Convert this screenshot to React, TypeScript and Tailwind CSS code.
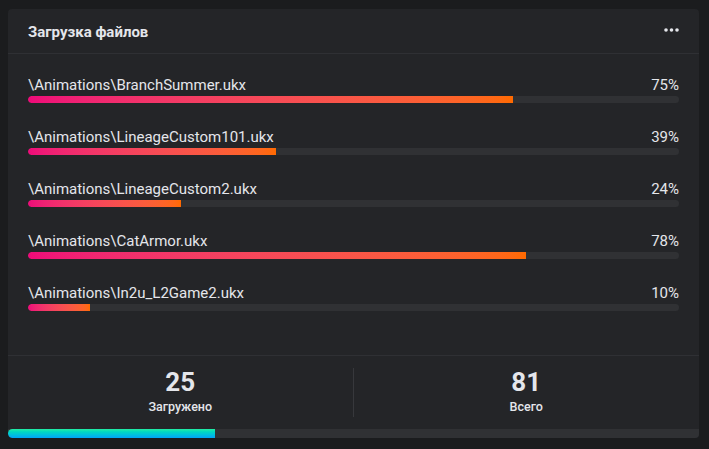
import React from "react";

interface UploadItem {
  path: string;
  percent: number;
  fill: number; // width of the bar, in %
}

const uploads: UploadItem[] = [
  { path: "\\Animations\\BranchSummer.ukx", percent: 75, fill: 74.5 },
  { path: "\\Animations\\LineageCustom101.ukx", percent: 39, fill: 38.1 },
  { path: "\\Animations\\LineageCustom2.ukx", percent: 24, fill: 23.5 },
  { path: "\\Animations\\CatArmor.ukx", percent: 78, fill: 76.5 },
  { path: "\\Animations\\In2u_L2Game2.ukx", percent: 10, fill: 9.5 },
];

const uploaded = 25;
const total = 81;

const Stat: React.FC<{ value: number; label: string; divider?: boolean }> = ({ value, label, divider }) => (
  <div className={`h-[49px] mt-[12px] flex flex-col items-center ${divider ? "border-r border-[#37383c]" : ""}`}>
    <span className="text-[26px] font-bold leading-[30px] mt-[-1px]">{value}</span>
    <span className="text-[12.5px] font-medium leading-4 mt-[2px]">{label}</span>
  </div>
);

const App: React.FC = () => {
  return (
    <div className="min-h-screen w-[709px] h-[449px] bg-[#1b1c1e] pt-[9px] pl-[8px] font-['Roboto',sans-serif] text-[#e4e6eb]">
      <div className="w-[691px] h-[429px] bg-[#242528] rounded-[4px] flex flex-col overflow-hidden">
        {/* Header */}
        <div className="h-[45px] shrink-0 flex items-center justify-between px-[20px] border-b border-[#2f3034]">
          <h2 className="text-[15px] font-bold leading-5 mt-[1px]">Загрузка файлов</h2>
          <svg width="15" height="4" viewBox="0 0 15 4" className="mt-[-2px]">
            <circle cx="2" cy="2" r="1.8" fill="#e4e6eb" />
            <circle cx="7.5" cy="2" r="1.8" fill="#e4e6eb" />
            <circle cx="13" cy="2" r="1.8" fill="#e4e6eb" />
          </svg>
        </div>

        {/* File list */}
        <div className="shrink-0 flex flex-col gap-[24px] px-[20px] pt-[21px] pb-[44px] border-b border-[#2f3034]">
          {uploads.map((u) => (
            <div key={u.path} className="flex flex-col">
              <div className="flex justify-between text-[15px] leading-5">
                <span>{u.path}</span>
                <span>{u.percent}%</span>
              </div>
              <div className="mt-[1px] h-[7px] rounded-full bg-[#303134] overflow-hidden">
                <div
                  className="h-full rounded-l-full bg-gradient-to-r from-[#ee0979] to-[#ff6a00]"
                  style={{ width: `${u.fill}%` }}
                />
              </div>
            </div>
          ))}
        </div>

        {/* Stats */}
        <div className="flex-1 grid grid-cols-2 items-start">
          <Stat value={uploaded} label="Загружено" divider />
          <Stat value={total} label="Всего" />
        </div>

        {/* Total progress */}
        <div className="h-[9px] shrink-0 bg-[#303134]">
          <div className="h-full w-[30%] rounded-l-full bg-gradient-to-b from-[#22eda2] to-[#02a4f8]" />
        </div>
      </div>
    </div>
  );
};

export default App;
